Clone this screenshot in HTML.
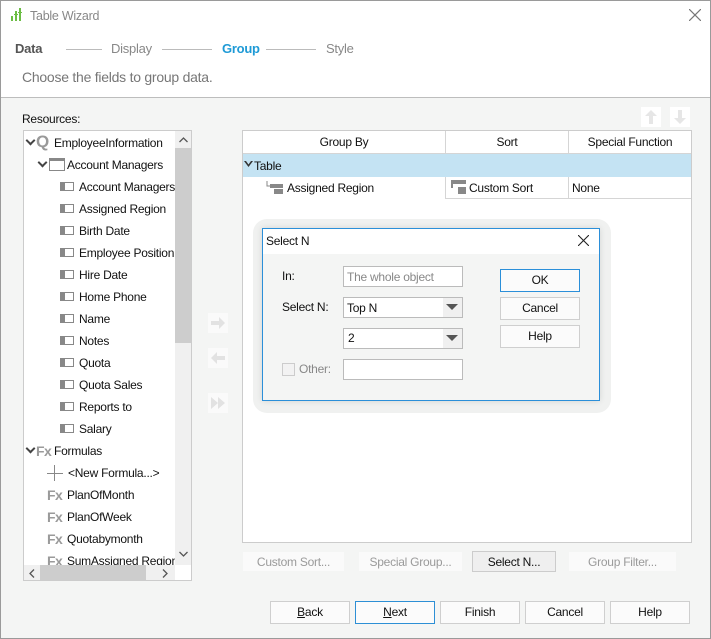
<!DOCTYPE html>
<html><head><meta charset="utf-8"><style>
*{margin:0;padding:0;box-sizing:border-box}
body{width:711px;height:639px;overflow:hidden;background:#f4f5f4;font-family:"Liberation Sans",sans-serif;font-size:12px;color:#111;position:relative;letter-spacing:-0.25px}
.a{position:absolute}
.t{position:absolute;white-space:nowrap;line-height:14px}
.btn{position:absolute;background:#fbfbfb;border:1px solid #cfcfcf;text-align:center;line-height:20px;font-size:12px;color:#111}
.dis{color:#9a9a9a;border-color:#f4f5f4;background:#fafafa}
.fi{position:absolute;width:14px;height:9px;border:1px solid #888;border-left:5px solid #888;background:#fff}
.fx{position:absolute;font-family:"Liberation Sans",sans-serif;font-weight:bold;font-size:14px;color:#9a9a9a;line-height:14px;letter-spacing:-0.5px}
.chev{position:absolute;width:7px;height:7px;border-right:2px solid #444;border-bottom:2px solid #444;transform:rotate(45deg)}
</style></head><body>
<div class="a" style="left:0;top:0;width:711px;height:639px;border:1px solid #9a9a9a"></div>
<div class="a" style="left:1px;top:1px;width:709px;height:97px;background:#fff;border-bottom:1px solid #bdbdbd"></div>
<svg class="a" style="left:11px;top:7px" width="14" height="16"><rect x="0" y="9" width="2" height="5" fill="#6cbd45"/><rect x="4" y="4" width="2" height="10" fill="#6cbd45"/><rect x="8" y="1" width="2" height="13" fill="#6cbd45"/><rect x="3" y="7" width="4" height="1" fill="#6cbd45"/><rect x="7" y="5" width="4" height="1" fill="#6cbd45"/></svg>
<div class="t" style="left:30px;top:9px;font-size:12.5px;color:#888">Table Wizard</div>
<svg class="a" style="left:689px;top:9px" width="12" height="12"><path d="M0 0L12 12M12 0L0 12" stroke="#777" stroke-width="1.2"/></svg>
<div class="t" style="left:15px;top:42px;font-size:13px;font-weight:bold;color:#555">Data</div>
<div class="a" style="left:66px;top:49px;width:36px;height:1px;background:#bbb"></div>
<div class="t" style="left:111px;top:42px;font-size:13px;color:#888">Display</div>
<div class="a" style="left:162px;top:49px;width:50px;height:1px;background:#bbb"></div>
<div class="t" style="left:222px;top:42px;font-size:13px;font-weight:bold;color:#1e9ad6">Group</div>
<div class="a" style="left:266px;top:49px;width:50px;height:1px;background:#bbb"></div>
<div class="t" style="left:326px;top:42px;font-size:13px;color:#888">Style</div>
<div class="t" style="left:22px;top:69px;font-size:14px;color:#777;line-height:16px">Choose the fields to group data.</div>
<div class="t" style="left:22px;top:112px">Resources:</div>
<div class="a" style="left:23px;top:130px;width:169px;height:451px;border:1px solid #ccc;background:#fff;overflow:hidden">
 <div class="a" style="left:151px;top:0;width:16px;height:434px;background:#f0f0f0"></div>
 <div class="a" style="left:151px;top:17px;width:16px;height:195px;background:#cdcdcd"></div>
 <svg class="a" style="left:155px;top:6px" width="9" height="6"><path d="M0.5 5L4.5 1 8.5 5" stroke="#555" stroke-width="1.3" fill="none"/></svg>
 <svg class="a" style="left:155px;top:420px" width="9" height="6"><path d="M0.5 1L4.5 5 8.5 1" stroke="#555" stroke-width="1.3" fill="none"/></svg>
 <div class="a" style="left:0;top:434px;width:151px;height:16px;background:#f0f0f0"></div>
 <div class="a" style="left:16px;top:434px;width:106px;height:16px;background:#cdcdcd"></div>
 <svg class="a" style="left:5px;top:438px" width="6" height="9"><path d="M5 0.5L1 4.5 5 8.5" stroke="#555" stroke-width="1.3" fill="none"/></svg>
 <svg class="a" style="left:138px;top:438px" width="6" height="9"><path d="M1 0.5L5 4.5 1 8.5" stroke="#555" stroke-width="1.3" fill="none"/></svg>
 <div class="a" style="left:0;top:0;width:151px;height:434px;overflow:hidden">
  <div class="chev" style="left:3px;top:6px"></div>
  <div class="t" style="left:12px;top:2px;font-size:17px;font-weight:bold;color:#999;line-height:17px">Q</div>
  <div class="t" style="left:30px;top:5px">EmployeeInformation</div>
  <div class="chev" style="left:15px;top:28px"></div>
  <div class="a" style="left:25px;top:27px;width:16px;height:13px;border:1px solid #888;border-top:3px solid #888"></div>
  <div class="t" style="left:43px;top:27px">Account Managers</div>
  <div class="fi" style="left:36px;top:51px"></div><div class="t" style="left:55px;top:49px">Account Managers I</div>
  <div class="fi" style="left:36px;top:73px"></div><div class="t" style="left:55px;top:71px">Assigned Region</div>
  <div class="fi" style="left:36px;top:95px"></div><div class="t" style="left:55px;top:93px">Birth Date</div>
  <div class="fi" style="left:36px;top:117px"></div><div class="t" style="left:55px;top:115px">Employee Position</div>
  <div class="fi" style="left:36px;top:139px"></div><div class="t" style="left:55px;top:137px">Hire Date</div>
  <div class="fi" style="left:36px;top:161px"></div><div class="t" style="left:55px;top:159px">Home Phone</div>
  <div class="fi" style="left:36px;top:183px"></div><div class="t" style="left:55px;top:181px">Name</div>
  <div class="fi" style="left:36px;top:205px"></div><div class="t" style="left:55px;top:203px">Notes</div>
  <div class="fi" style="left:36px;top:227px"></div><div class="t" style="left:55px;top:225px">Quota</div>
  <div class="fi" style="left:36px;top:249px"></div><div class="t" style="left:55px;top:247px">Quota Sales</div>
  <div class="fi" style="left:36px;top:271px"></div><div class="t" style="left:55px;top:269px">Reports to</div>
  <div class="fi" style="left:36px;top:293px"></div><div class="t" style="left:55px;top:291px">Salary</div>
  <div class="chev" style="left:3px;top:314px"></div>
  <div class="fx" style="left:12px;top:313px">Fx</div><div class="t" style="left:30px;top:313px">Formulas</div>
  <div class="a" style="left:23px;top:342px;width:16px;height:1px;background:#888"></div>
  <div class="a" style="left:30px;top:334px;width:1px;height:16px;background:#888"></div>
  <div class="t" style="left:44px;top:335px">&lt;New Formula...&gt;</div>
  <div class="fx" style="left:23px;top:357px">Fx</div><div class="t" style="left:43px;top:357px">PlanOfMonth</div>
  <div class="fx" style="left:23px;top:379px">Fx</div><div class="t" style="left:43px;top:379px">PlanOfWeek</div>
  <div class="fx" style="left:23px;top:401px">Fx</div><div class="t" style="left:43px;top:401px">Quotabymonth</div>
  <div class="fx" style="left:23px;top:423px">Fx</div><div class="t" style="left:43px;top:423px">SumAssigned Region</div>
 </div>
</div>
<div class="a" style="left:208px;top:313px;width:20px;height:20px;background:#fafafa"></div>
<svg class="a" style="left:210px;top:316px" width="16" height="14"><path d="M1 5h8V1l6 6-6 6V9H1z" fill="#e2e2e2"/></svg>
<div class="a" style="left:208px;top:348px;width:20px;height:20px;background:#fafafa"></div>
<svg class="a" style="left:210px;top:351px" width="16" height="14"><path d="M15 5H7V1L1 7l6 6V9h8z" fill="#e2e2e2"/></svg>
<div class="a" style="left:208px;top:393px;width:20px;height:20px;background:#fafafa"></div>
<svg class="a" style="left:210px;top:396px" width="16" height="14"><path d="M1 1l7 6-7 6zM8 1l7 6-7 6z" fill="#e2e2e2"/></svg>
<div class="a" style="left:641px;top:107px;width:20px;height:20px;background:#fff"></div>
<svg class="a" style="left:644px;top:109px" width="14" height="16"><path d="M7 1l6 6H9v8H5V7H1z" fill="#e6e6e6"/></svg>
<div class="a" style="left:670px;top:107px;width:20px;height:20px;background:#fff"></div>
<svg class="a" style="left:673px;top:109px" width="14" height="16"><path d="M7 15l6-6H9V1H5v8H1z" fill="#e6e6e6"/></svg>
<div class="a" style="left:242px;top:130px;width:450px;height:413px;border:1px solid #ccc;background:#fff"></div>
<div class="a" style="left:243px;top:153px;width:448px;height:1px;background:#d5d5d5"></div>
<div class="a" style="left:445px;top:131px;width:1px;height:68px;background:#d5d5d5"></div>
<div class="a" style="left:568px;top:131px;width:1px;height:68px;background:#d5d5d5"></div>
<div class="a" style="left:446px;top:198px;width:245px;height:1px;background:#d5d5d5"></div>
<div class="t" style="left:243px;top:135px;width:202px;text-align:center">Group By</div>
<div class="t" style="left:446px;top:135px;width:122px;text-align:center">Sort</div>
<div class="t" style="left:569px;top:135px;width:122px;text-align:center">Special Function</div>
<div class="a" style="left:243px;top:154px;width:448px;height:23px;background:#c4e3f3"></div>
<svg class="a" style="left:244px;top:161px" width="9" height="7"><path d="M0 0l4.5 6L9 0H7L4.5 3.5 2 0z" fill="#333"/></svg>
<div class="t" style="left:254px;top:159px">Table</div>
<svg class="a" style="left:266px;top:181px" width="18" height="14"><path d="M1 0v5h3" stroke="#888" fill="none"/><rect x="4" y="3" width="13" height="4" fill="#888"/><rect x="8" y="8" width="9" height="5" fill="#888"/></svg>
<div class="t" style="left:287px;top:181px">Assigned Region</div>
<svg class="a" style="left:451px;top:180px" width="16" height="15"><rect x="0" y="0" width="15" height="4" fill="#888"/><rect x="0" y="4" width="2" height="4" fill="#888"/><rect x="7" y="7" width="8" height="7" fill="#888"/></svg>
<div class="t" style="left:469px;top:181px">Custom Sort</div>
<div class="t" style="left:572px;top:181px">None</div>
<div class="btn dis" style="left:242px;top:551px;width:103px;height:21px">Custom Sort...</div>
<div class="btn dis" style="left:358px;top:551px;width:105px;height:21px">Special Group...</div>
<div class="btn" style="left:472px;top:551px;width:84px;height:21px;background:#efefef;border-color:#ccc">Select N...</div>
<div class="btn dis" style="left:568px;top:551px;width:109px;height:21px">Group Filter...</div>
<div class="btn" style="left:270px;top:601px;width:80px;height:23px;line-height:21px"><u>B</u>ack</div>
<div class="btn" style="left:355px;top:601px;width:80px;height:23px;line-height:21px;border-color:#2d8fd5"><u>N</u>ext</div>
<div class="btn" style="left:440px;top:601px;width:80px;height:23px;line-height:21px">Finish</div>
<div class="btn" style="left:525px;top:601px;width:80px;height:23px;line-height:21px">Cancel</div>
<div class="btn" style="left:610px;top:601px;width:80px;height:23px;line-height:21px">Help</div>
<div class="a" style="left:253px;top:219px;width:358px;height:194px;border-radius:14px;background:#f0f1f0"></div>
<div class="a" style="left:262px;top:228px;width:338px;height:173px;border:1px solid #2b8fd9;background:#f4f5f4;box-shadow:0 0 6px rgba(0,0,0,.12)"></div>
<div class="a" style="left:263px;top:229px;width:336px;height:25px;background:#fff"></div>
<div class="t" style="left:266px;top:234px">Select N</div>
<svg class="a" style="left:578px;top:235px" width="11" height="11"><path d="M0 0L11 11M11 0L0 11" stroke="#222" stroke-width="1.1"/></svg>
<div class="t" style="left:282px;top:269px">In:</div>
<div class="a" style="left:343px;top:266px;width:120px;height:21px;border:1px solid #bbb;background:#fff"></div>
<div class="t" style="left:347px;top:270px;color:#888">The whole object</div>
<div class="t" style="left:282px;top:300px">Select N:</div>
<div class="a" style="left:343px;top:297px;width:120px;height:21px;border:1px solid #bbb;background:#fff"></div>
<div class="a" style="left:443px;top:298px;width:19px;height:19px;background:#f0f0f0"></div>
<svg class="a" style="left:446px;top:304px" width="12" height="7"><path d="M0 0h12L6 6z" fill="#555"/></svg>
<div class="t" style="left:347px;top:301px">Top N</div>
<div class="a" style="left:343px;top:328px;width:120px;height:21px;border:1px solid #bbb;background:#fff"></div>
<div class="a" style="left:443px;top:329px;width:19px;height:19px;background:#f0f0f0"></div>
<svg class="a" style="left:446px;top:335px" width="12" height="7"><path d="M0 0h12L6 6z" fill="#555"/></svg>
<div class="t" style="left:348px;top:331px">2</div>
<div class="a" style="left:282px;top:363px;width:13px;height:13px;border:1px solid #ccc;background:#f2f2f2"></div>
<div class="t" style="left:299px;top:362px;color:#888">Other:</div>
<div class="a" style="left:343px;top:359px;width:120px;height:21px;border:1px solid #bbb;background:#fff"></div>
<div class="btn" style="left:500px;top:269px;width:80px;height:23px;line-height:21px;border-color:#2b8fd9">OK</div>
<div class="btn" style="left:500px;top:297px;width:80px;height:23px;line-height:21px">Cancel</div>
<div class="btn" style="left:500px;top:325px;width:80px;height:23px;line-height:21px">Help</div>
</body></html>
